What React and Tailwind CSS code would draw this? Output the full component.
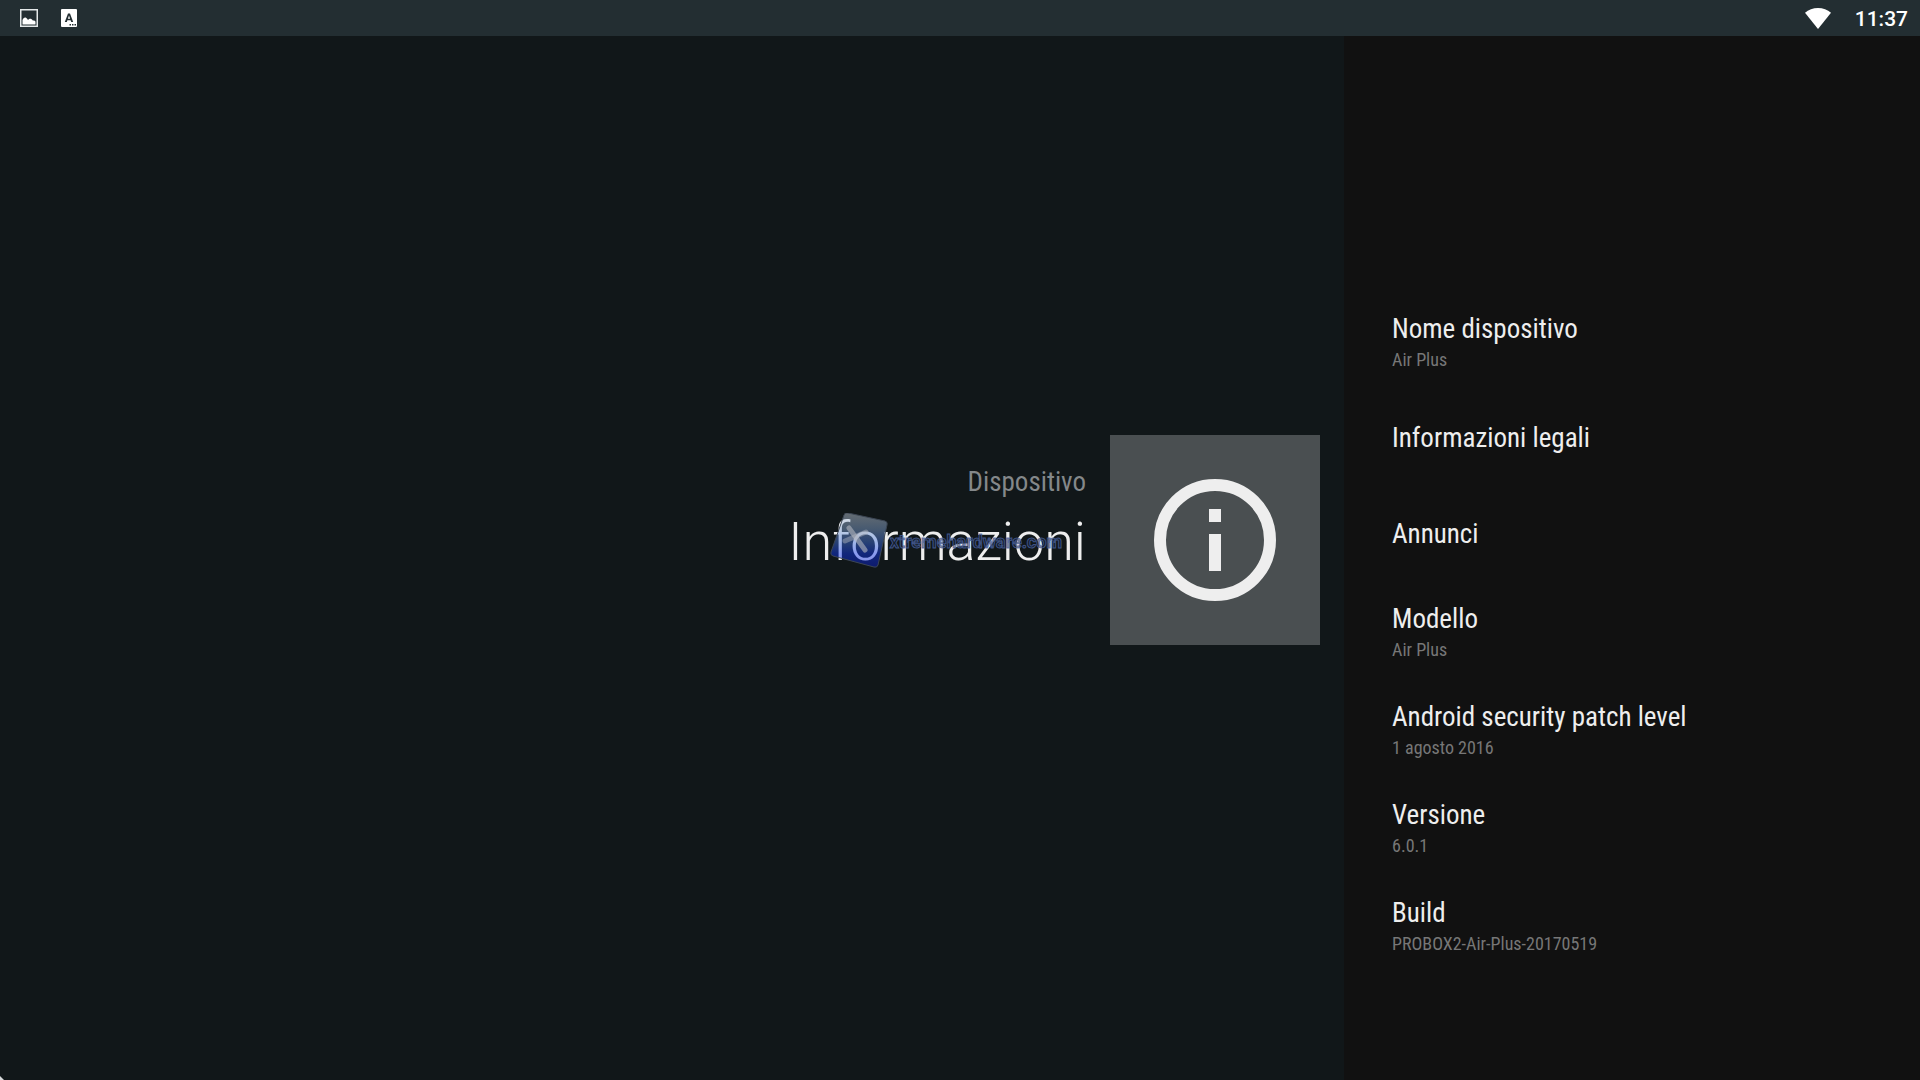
import React from "react";

const items = [
  { title: "Nome dispositivo", value: "Air Plus" },
  { title: "Informazioni legali" },
  { title: "Annunci" },
  { title: "Modello", value: "Air Plus" },
  { title: "Android security patch level", value: "1 agosto 2016" },
  { title: "Versione", value: "6.0.1" },
  { title: "Build", value: "PROBOX2-Air-Plus-20170519" },
];

function StatusBar() {
  return (
    <header className="flex h-9 items-center justify-between bg-[#232e32] pr-3 pl-5 text-white">
      <div className="flex items-center gap-[23px]">
        <svg viewBox="0 0 18 18" className="size-[18px]" aria-hidden="true">
          <rect x="0.75" y="0.75" width="16.5" height="16.5" fill="none" stroke="#e4e8e9" strokeWidth="1.5" />
          <path d="M2.5 15.5v-4.5c.7-2 2.2-3 3.5-2.2.9.4 1.5 1.2 2 2.2.9-1 2.2-1.6 3.3-1 .8.4 1.2 1 1.5 1.5 1.2-.3 2.2.2 2.7 1.1v2.9z" fill="#fff" />
        </svg>
        <svg viewBox="0 0 16 18" className="h-[18px] w-4" aria-hidden="true">
          <rect width="16" height="18" rx="1" fill="#fff" />
          <path d="M3.8 13 7 4.5h2L12.2 13h-2l-.6-1.800H6.400L5.800 13zM6.900 9.700h2.200L8 6.500z" fill="#232e32" />
          <path d="M8.500 15h1.500v1.500H8.500zM11 15h1.500v1.500H11zM13.500 15H15v1.500h-1.500z" fill="#232e32" />
        </svg>
      </div>
      <div className="flex items-center gap-6">
        <svg viewBox="0 0 26 21" className="h-[21px] w-[26px]" aria-hidden="true">
          <path d="M13 21 0 4.800C3.500 1.700 8 0 13 0s9.500 1.700 13 4.800z" fill="#fff" />
        </svg>
        <time className="pt-0.5 text-[21px] leading-6 font-medium">11:37</time>
      </div>
    </header>
  );
}

function Watermark() {
  return (
    <div className="pointer-events-none absolute top-1/2 right-6 flex -translate-y-1/2 items-center">
      <svg viewBox="0 0 60 58" className="h-[58px] w-[60px]" aria-hidden="true">
        <defs>
          <linearGradient id="badge" x1="0" y1="0" x2="0" y2="1">
            <stop offset="0" stopColor="#c8d2dc" />
            <stop offset="0.3" stopColor="#86a8d8" />
            <stop offset="0.55" stopColor="#4070e0" />
            <stop offset="0.75" stopColor="#1038f0" />
            <stop offset="1" stopColor="#0a1ed0" />
          </linearGradient>
        </defs>
        <path d="M18 0 55 8q3 1 2 4L48 52q-1 3-4 2L3 43q-3-1-2-4L14 2q1-3 4-2z" fill="url(#badge)" fillOpacity="0.46" stroke="#3c4654" />
        <path d="M19 15 35 37" stroke="#b4b8c0" strokeOpacity="0.6" strokeWidth="5" strokeLinecap="round" />
        <path d="M36 19 15 28" stroke="#b4b8c0" strokeOpacity="0.45" strokeWidth="5" strokeLinecap="round" />
      </svg>
      <span className="text-lg leading-6 font-bold text-[#1c2742]/50 [-webkit-text-stroke:1px_#4a62a0cc]">
        xtremehardware.com
      </span>
    </div>
  );
}

function SettingItem({ title, value }) {
  return (
    <li>
      <button
        type="button"
        className={`flex w-full flex-col gap-[3px] px-12 text-left ${value ? "h-[98px] pt-[21px]" : "h-24 justify-center"}`}
      >
        <span className="text-[27px] leading-8 text-[#eeeeee]">{title}</span>
        {value ? <span className="text-lg leading-6 text-[#777777]">{value}</span> : null}
      </button>
    </li>
  );
}

export default function App() {
  return (
    <div className="relative flex min-h-screen flex-col overflow-hidden bg-[#111719] font-['Roboto',sans-serif]">
      <StatusBar />
      <div className="flex flex-1">
        <main className="flex w-[70%] items-center justify-end gap-6 pr-6 pb-9">
          <div className="pb-10 text-right">
            <p className="font-['Roboto_Condensed',Roboto,sans-serif] text-[27px] leading-8 text-[#84888a]">
              Dispositivo
            </p>
            <div className="relative mt-3">
              <h1 className="text-[54px] leading-[64px] font-light text-[#eeeeee]">Informazioni</h1>
              <Watermark />
            </div>
          </div>
          <div className="flex size-[210px] items-center justify-center bg-[#4a4f51]">
            <svg viewBox="0 0 122 122" className="size-[122px]" aria-hidden="true">
              <circle cx="61" cy="61" r="55" fill="none" stroke="#eeeeee" strokeWidth="12" />
              <path d="M55 30h12v13H55zM55 55h12v37H55z" fill="#eeeeee" />
            </svg>
          </div>
        </main>
        <aside className="w-[30%] bg-[#111111] pt-64 pb-16 font-['Roboto_Condensed',Roboto,sans-serif]">
          <ul>
            {items.map((item) => (
              <SettingItem key={item.title} {...item} />
            ))}
          </ul>
        </aside>
      </div>
      <svg viewBox="0 0 4 4" className="absolute bottom-0 left-0 size-1" aria-hidden="true">
        <path d="M0 0 4 4H0z" fill="#d8dadb" />
      </svg>
    </div>
  );
}
